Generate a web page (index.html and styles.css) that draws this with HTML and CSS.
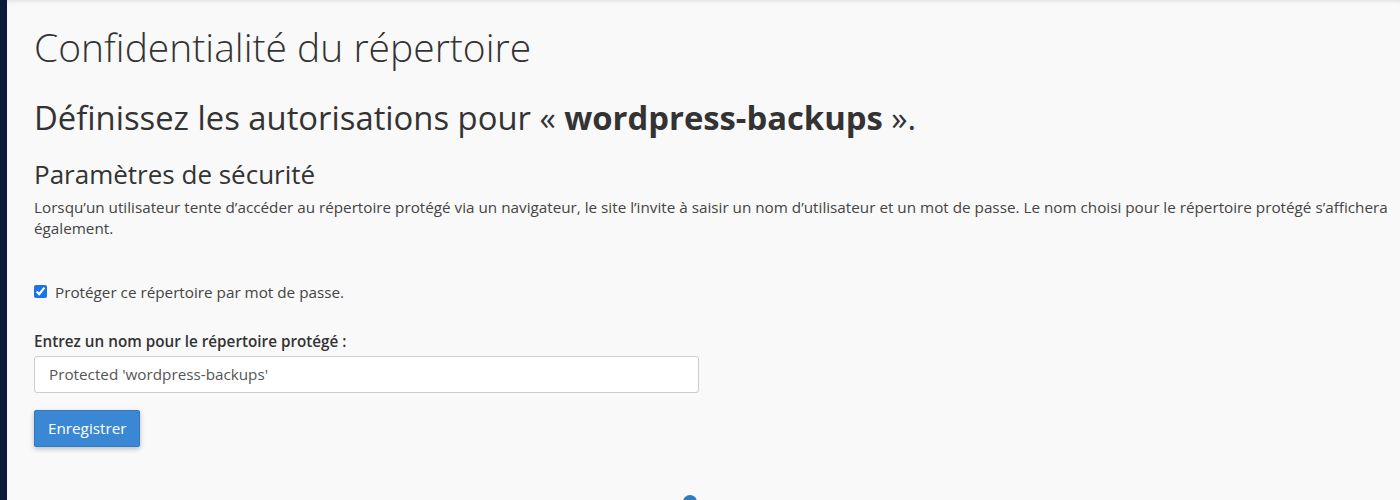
FILE: index.html
```html
<!DOCTYPE html>
<html lang="fr">
<head>
  <meta charset="UTF-8" />
  <title>Confidentialité du répertoire</title>
  <link rel="stylesheet" href="styles.css">
</head>
<body>
  <div class="sidebar"></div>

  <main class="content">
    <h1 class="page-title">Confidentialité du répertoire</h1>

    <h2 class="subtitle">Définissez les autorisations pour « <strong>wordpress-backups</strong> ».</h2>

    <section class="security">
      <h3>Paramètres de sécurité</h3>
      <p class="help">Lorsqu’un utilisateur tente d’accéder au répertoire protégé via un navigateur, le site l’invite à saisir un nom d’utilisateur et un mot de passe. Le nom choisi pour le répertoire protégé s’affichera également.</p>

      <label class="check-row">
        <input type="checkbox" checked />
        <span>Protéger ce répertoire par mot de passe.</span>
      </label>

      <div class="field">
        <label for="dirname">Entrez un nom pour le répertoire protégé :</label>
        <input type="text" id="dirname" value="Protected 'wordpress-backups'" />
      </div>

      <button class="btn-primary">Enregistrer</button>
    </section>

    <!-- loading dot peeking at the bottom -->
    <div class="loader"></div>
  </main>
</body>
</html>
```

FILE: styles.css
```css
html, body {
  height: 100%;
}

body {
  margin: 0;
  display: flex;
  font-family: "Open Sans", sans-serif;
  font-size: 15.25px;
  color: #333;
  background: #f9f9f9;
  overflow: hidden;
}

.sidebar {
  width: 7px;
  flex-shrink: 0;
  background: #0b1a38;
}

.content {
  position: relative;
  flex: 1;
  padding: 0 10px 0 27px;
  box-shadow: inset 0 4px 4px -3px rgba(0, 0, 0, 0.12);
}

.page-title {
  font-size: 39px;
  font-weight: 300;
  line-height: 1.1;
  margin: 26px 0 0;
  color: #333;
}

.subtitle {
  font-size: 32.8px;
  font-weight: 400;
  line-height: 1.1;
  margin: 31px 0 0;
  color: #333;
}

.subtitle strong {
  font-weight: 700;
}

.security h3 {
  font-size: 26px;
  font-weight: 400;
  line-height: 1.1;
  margin: 24px 0 0;
  color: #333;
}

.help {
  line-height: 21px;
  margin: 8px 0 0;
  color: #444;
}

.check-row {
  display: flex;
  align-items: center;
  gap: 8px;
  margin-top: 43px;
  color: #444;
}

.check-row input {
  width: 13px;
  height: 13px;
  margin: 0;
  accent-color: #1a73e8;
}

.field {
  margin-top: 29px;
  display: flex;
  flex-direction: column;
  gap: 5px;
}

.field label {
  font-weight: 600;
  color: #333;
}

.field input {
  width: 665px;
  height: 37px;
  box-sizing: border-box;
  padding: 6px 14px;
  border: 1px solid #ccc;
  border-radius: 3px;
  background: #fff;
  font-family: inherit;
  font-size: inherit;
  color: #555;
}

.btn-primary {
  display: block;
  margin-top: 17px;
  height: 37px;
  padding: 0 13px;
  border: 1px solid #2f78c4;
  border-radius: 2px;
  background: #3a88d4;
  color: #fff;
  font-family: inherit;
  font-size: inherit;
  box-shadow: 0 2px 5px rgba(0, 0, 0, 0.25);
  cursor: pointer;
}

.loader {
  position: absolute;
  left: 676px;
  top: 495px;
  width: 14px;
  height: 14px;
  border-radius: 50%;
  background: #2f7bc2;
}
```
